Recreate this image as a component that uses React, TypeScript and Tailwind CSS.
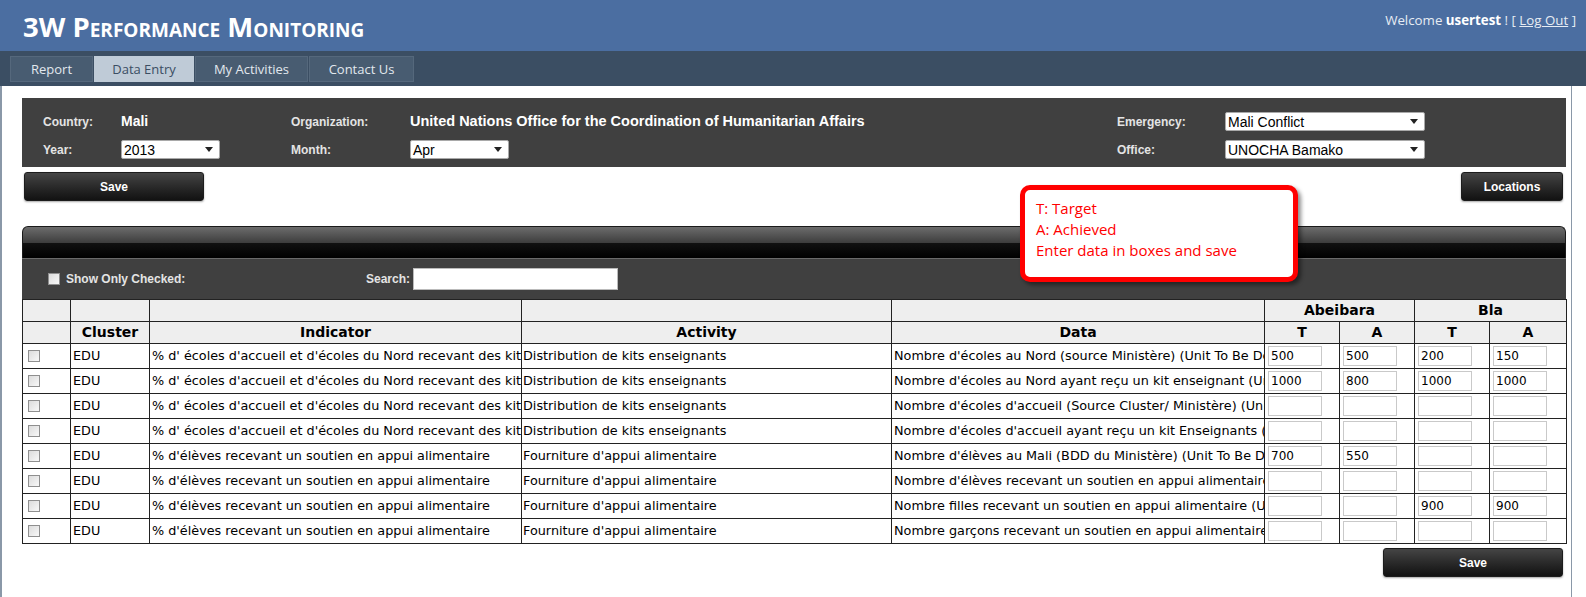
import React from 'react';

const tabs = [
  { label: 'Report', w: 'w-[83px]', active: false },
  { label: 'Data Entry', w: 'w-[100px]', active: true },
  { label: 'My Activities', w: 'w-[113px]', active: false },
  { label: 'Contact Us', w: 'w-[105px]', active: false },
];

const indA = "% d' écoles d'accueil et d'écoles du Nord recevant des kits enseignants";
const indB = "% d'élèves recevant un soutien en appui alimentaire";
const actA = 'Distribution de kits enseignants';
const actB = "Fourniture d'appui alimentaire";

const rows = [
  { ind: indA, act: actA, data: "Nombre d'écoles au Nord (source Ministère) (Unit To Be Determined)", v: ['500', '500', '200', '150'] },
  { ind: indA, act: actA, data: "Nombre d'écoles au Nord ayant reçu un kit enseignant (Unit To Be Determined)", v: ['1000', '800', '1000', '1000'] },
  { ind: indA, act: actA, data: "Nombre d'écoles d'accueil (Source Cluster/ Ministère) (Unit To Be Determined)", v: ['', '', '', ''] },
  { ind: indA, act: actA, data: "Nombre d'écoles d'accueil ayant reçu un kit Enseignants (Unit To Be Determined)", v: ['', '', '', ''] },
  { ind: indB, act: actB, data: "Nombre d'élèves au Mali (BDD du Ministère) (Unit To Be Determined)", v: ['700', '550', '', ''] },
  { ind: indB, act: actB, data: "Nombre d'élèves recevant un soutien en appui alimentaire (Unit To Be Determined)", v: ['', '', '', ''] },
  { ind: indB, act: actB, data: 'Nombre filles recevant un soutien en appui alimentaire (Unit To Be Determined)', v: ['', '', '900', '900'] },
  { ind: indB, act: actB, data: 'Nombre garçons recevant un soutien en appui alimentaire (Unit To Be Determined)', v: ['', '', '', ''] },
];

function Select({ value, w }: { value: string; w: string }) {
  return (
    <div className={`flex h-[19px] ${w} items-center justify-between rounded-[2px] border border-[#a9a9a9] bg-white pl-[2px] pr-[6px] text-[14px] font-normal leading-none text-black`}>
      <span>{value}</span>
      <svg width="8" height="5" viewBox="0 0 8 5">
        <path d="M0 0h8L4 5z" fill="#222" />
      </svg>
    </div>
  );
}

function DarkButton({ label, w }: { label: string; w: string }) {
  return (
    <button className={`h-[29px] ${w} rounded-[3px] border border-[#1c1c1c] bg-linear-to-b from-[#454545] to-[#121212] text-[12px] font-bold text-white shadow-[0_1px_2px_rgba(0,0,0,0.35)]`}>
      {label}
    </button>
  );
}

function Check() {
  return <span className="block h-[12px] w-[12px] border border-[#8f8f8f] bg-linear-to-br from-[#dcdcdc] to-[#f8f8f8]" />;
}

export default function App() {
  return (
    <div className="min-h-screen bg-white font-['Liberation_Sans',Arial,sans-serif]">
      <header className="flex h-[51px] items-start justify-between bg-[#4b6ea1]">
        <h1 className="pl-[23px] pt-[10px] font-['Open_Sans',sans-serif] text-[27.5px] font-bold leading-[33px] text-white [font-variant:small-caps]">
          3W Performance Monitoring
        </h1>
        <div className="pr-[10px] pt-[11px] font-['Open_Sans',sans-serif] text-[13.3px] text-[#e6ecf3]">
          Welcome <b className="text-white">usertest</b> ! [ <a className="underline">Log Out</a> ]
        </div>
      </header>

      <nav className="flex h-[35px] gap-px bg-[#3b4e63] pl-[10px] pt-[5px]">
        {tabs.map((t) => (
          <div
            key={t.label}
            className={`flex h-[26px] ${t.w} items-center justify-center border pt-[2px] font-['Open_Sans',sans-serif] text-[13px] ${
              t.active ? 'border-[#bfcbd7] bg-[#bfcbd7] text-[#3b4e63]' : 'border-[#55687c] bg-[#485c71] text-[#e2e8ee]'
            }`}
          >
            {t.label}
          </div>
        ))}
      </nav>

      <main className="relative min-h-[511px] w-[1572px] border-l-2 border-r border-[#8a98a8] pb-[20px] pl-[20px] pt-[12px]">
        <div className="grid h-[69px] w-[1544px] grid-cols-[99px_170px_119px_707px_108px_200px] grid-rows-[19px_19px] gap-y-[9px] bg-[#404040] pt-[14px] text-[12px] font-bold text-[#e4e4e4]">
          <span className="self-center pl-[21px]">Country:</span>
          <span className="self-center text-[14px] text-white">Mali</span>
          <span className="self-center">Organization:</span>
          <span className="self-center text-[14.5px] text-white">United Nations Office for the Coordination of Humanitarian Affairs</span>
          <span className="self-center">Emergency:</span>
          <Select value="Mali Conflict" w="w-[200px]" />
          <span className="self-center pl-[21px]">Year:</span>
          <Select value="2013" w="w-[99px]" />
          <span className="self-center">Month:</span>
          <Select value="Apr" w="w-[99px]" />
          <span className="self-center">Office:</span>
          <Select value="UNOCHA Bamako" w="w-[200px]" />
        </div>

        <div className="mt-[5px] flex w-[1544px] justify-between pl-[2px] pr-[3px]">
          <DarkButton label="Save" w="w-[180px]" />
          <DarkButton label="Locations" w="w-[102px]" />
        </div>

        <div className="absolute left-[1018px] top-[99px] h-[97px] w-[278px] rounded-[10px] border-[5px] border-[#ff0000] bg-white pl-[11px] pt-[8px] font-['Open_Sans',sans-serif] text-[15px] leading-[21px] text-[#ff0000] shadow-[3px_3px_4px_rgba(0,0,0,0.45)]">
          <div>T: Target</div>
          <div>A: Achieved</div>
          <div>Enter data in boxes and save</div>
        </div>

        <div className="mt-[25px] w-[1544px]">
          <div className="h-[32px] rounded-t-[6px] border border-b-0 border-[#1a1a1a] bg-[linear-gradient(to_bottom,#6c6c6c_0%,#3e3e3e_50%,#111_52%,#000_100%)]" />
          <div className="flex h-[41px] items-center border-t border-[#6a6a6a] bg-[#404040] text-[12px] font-bold text-[#e4e4e4]">
            <div className="flex w-[344px] items-center pl-[26px]">
              <Check />
              <span className="ml-[6px]">Show Only Checked:</span>
            </div>
            <span>Search:</span>
            <div className="ml-[3px] h-[22px] w-[205px] border border-[#bbb] bg-white" />
          </div>

          <table className="w-[1544px] table-fixed border-collapse font-['DejaVu_Sans',sans-serif] text-[12.8px] text-black">
            <colgroup>
              <col className="w-[48px]" />
              <col className="w-[79px]" />
              <col className="w-[372px]" />
              <col className="w-[370px]" />
              <col className="w-[373px]" />
              <col className="w-[75px]" />
              <col className="w-[75px]" />
              <col className="w-[75px]" />
              <col className="w-[77px]" />
            </colgroup>
            <thead className="bg-[#eeeeee] text-[14px] font-bold">
              <tr className="h-[21px]">
                <th className="border border-[#222]" />
                <th className="border border-[#222]" />
                <th className="border border-[#222]" />
                <th className="border border-[#222]" />
                <th className="border border-[#222]" />
                <th colSpan={2} className="border border-[#222]">Abeibara</th>
                <th colSpan={2} className="border border-[#222]">Bla</th>
              </tr>
              <tr className="h-[21px]">
                <th className="border border-[#222]" />
                <th className="border border-[#222]">Cluster</th>
                <th className="border border-[#222]">Indicator</th>
                <th className="border border-[#222]">Activity</th>
                <th className="border border-[#222]">Data</th>
                <th className="border border-[#222]">T</th>
                <th className="border border-[#222]">A</th>
                <th className="border border-[#222]">T</th>
                <th className="border border-[#222]">A</th>
              </tr>
            </thead>
            <tbody>
              {rows.map((r, i) => (
                <tr key={i} className="h-[25px]">
                  <td className="border border-[#222] pl-[5px]">
                    <Check />
                  </td>
                  <td className="border border-[#222] pl-[2px]">EDU</td>
                  <td className="overflow-hidden whitespace-nowrap border border-[#222] pl-[2px]">{r.ind}</td>
                  <td className="overflow-hidden whitespace-nowrap border border-[#222] pl-px">{r.act}</td>
                  <td className="overflow-hidden whitespace-nowrap border border-[#222] pl-[2px]">{r.data}</td>
                  {r.v.map((v, j) => (
                    <td key={j} className="border border-[#222] pl-[3px]">
                      <div className="flex h-[20px] w-[54px] items-center border border-[#c9c9c9] bg-white pl-[2px] text-[12px]">{v}</div>
                    </td>
                  ))}
                </tr>
              ))}
            </tbody>
          </table>

          <div className="mt-[4px] flex justify-end pr-[3px]">
            <DarkButton label="Save" w="w-[180px]" />
          </div>
        </div>
      </main>
    </div>
  );
}
